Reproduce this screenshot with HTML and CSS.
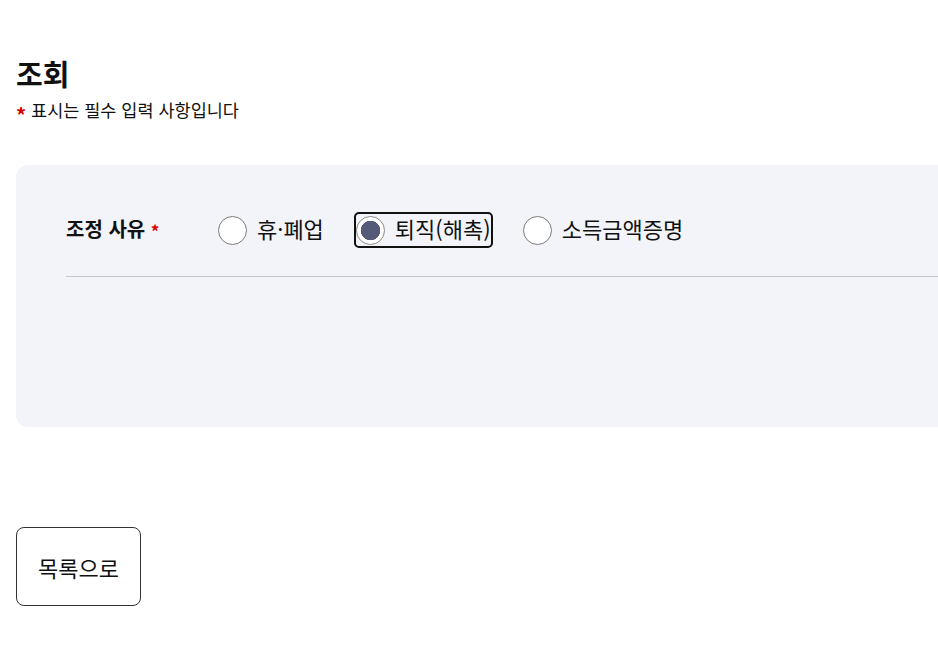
FILE: index.html
```html
<!DOCTYPE html>
<html lang="ko">
<head>
    <meta charset="UTF-8">
    <meta name="viewport" content="width=device-width, initial-scale=1.0">
    <title>조회</title>
    <link rel="stylesheet" href="styles.css">
</head>
<body>
    <div class="page">
        <h1 class="title">조회</h1>
        <p class="notice"><span class="req">*</span> 표시는 필수 입력 사항입니다</p>

        <div class="panel">
            <div class="row">
                <div class="row-label">조정 사유 <span class="req">*</span></div>
                <div class="options">
                    <label class="option">
                        <input type="radio" name="reason" value="close">
                        <span>휴·폐업</span>
                    </label>
                    <label class="option focused">
                        <input type="radio" name="reason" value="retire" checked>
                        <span>퇴직(해촉)</span>
                    </label>
                    <label class="option">
                        <input type="radio" name="reason" value="income">
                        <span>소득금액증명</span>
                    </label>
                </div>
            </div>
        </div>

        <button type="button" class="btn-list">목록으로</button>
    </div>
</body>
</html>
```

FILE: styles.css
```css
html, body {
    overflow-x: hidden;
}
body {
    margin: 0;
    font-family: "Noto Sans CJK KR", "Noto Sans", sans-serif;
    color: #111;
    background: #fff;
}
.page {
    padding: 51px 16px 40px;
}
.title {
    margin: 0;
    font-size: 29px;
    font-weight: 700;
    line-height: 44px;
}
.notice {
    margin: 2px 0 0;
    font-size: 17.5px;
    line-height: 24px;
}
.notice .req {
    font-size: 20px;
    top: 6px;
}
.req {
    color: #d40000;
    font-weight: 700;
    position: relative;
}
.panel {
    margin-top: 43px;
    width: 1100px;
    height: 262px;
    box-sizing: border-box;
    padding: 49px 50px 0;
    background: #f3f4f9;
    border-radius: 12px;
}
.row {
    display: flex;
    align-items: flex-start;
    height: 63px;
    box-sizing: border-box;
    border-bottom: 1px solid #c8c8c8;
}
.row-label {
    width: 152px;
    font-size: 20px;
    font-weight: 700;
    line-height: 30px;
}
.row-label .req {
    font-size: 17px;
    top: 1px;
}
.options {
    display: flex;
    gap: 32px;
}
.option {
    display: flex;
    align-items: center;
    gap: 10px;
    font-size: 22px;
    line-height: 32px;
    cursor: pointer;
}
.option span {
    position: relative;
    top: -2px;
}
.option.focused {
    outline: 2px solid #111;
    border-radius: 3px;
}
.option input {
    appearance: none;
    -webkit-appearance: none;
    margin: 0;
    width: 29px;
    height: 29px;
    border: 1px solid #7a7a7a;
    border-radius: 50%;
    background: #fff;
    box-sizing: border-box;
}
.option input:checked {
    border-color: #8a8a8a;
    background: radial-gradient(circle, #555a78 0 9.5px, #fff 10px);
}
.btn-list {
    margin-top: 100px;
    width: 125px;
    height: 79px;
    font-family: inherit;
    font-size: 22px;
    line-height: 28px;
    color: #111;
    background: #fff;
    border: 1px solid #333;
    border-radius: 8px;
    cursor: pointer;
}
```
